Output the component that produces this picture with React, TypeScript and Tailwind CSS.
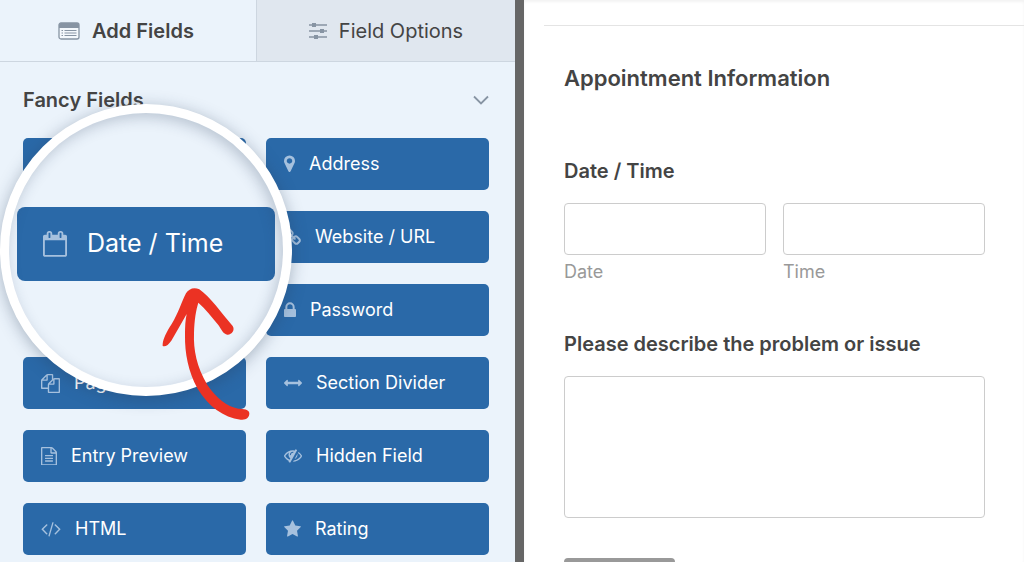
import React from 'react';

interface IconShape {
  viewBox: string;
  width: string;
  path: string;
}

interface FieldButtonProps {
  label?: string;
  name: string;
  icon?: IconShape;
}

const ICONS = {
  marker: {
    viewBox: '384 0 1024 1792',
    width: 'w-[11px]',
    path: 'M1152 640q0-106-75-181t-181-75-181 75-75 181 75 181 181 75 181-75 75-181zm256 0q0 109-33 179l-364 774q-16 33-47.5 52t-67.5 19-67.5-19-46.5-52l-365-774q-33-70-33-179 0-212 150-362t362-150 362 150 150 362z',
  },
  chain: {
    viewBox: '64 0 1664 1792',
    width: 'w-[17px]',
    path: 'M1520 1216q0-40-28-68l-208-208q-28-28-68-28-42 0-72 32 3 3 19 18.5t21.5 21.5 15 19 13 25.5 3.5 27.5q0 40-28 68t-68 28q-15 0-27.5-3.5t-25.5-13-19-15-21.5-21.5-18.5-19q-33 31-33 73 0 40 28 68l206 207q27 27 68 27 40 0 68-26l147-146q28-28 28-67zm-703-705q0-40-28-68l-206-207q-28-28-68-28-39 0-68 27l-147 146q-28 28-28 67 0 40 28 68l208 208q27 27 68 27 42 0 72-31-3-3-19-18.5t-21.5-21.5-15-19-13-25.5-3.5-27.5q0-40 28-68t68-28q15 0 27.5 3.5t25.5 13 19 15 21.5 21.5 18.5 19q33-31 33-73zm895 705q0 120-85 203l-147 146q-83 83-203 83-121 0-204-85l-206-207q-83-83-83-203 0-123 88-209l-88-88q-86 88-208 88-120 0-204-84l-208-208q-84-84-84-204t85-203l147-146q83-83 203-83 121 0 204 85l206 207q83 83 83 203 0 123-88 209l88 88q86-88 208-88 120 0 204 84l208 208q84 84 84 204z',
  },
  lock: {
    viewBox: '320 0 1152 1792',
    width: 'w-3',
    path: 'M640 768h512v-192q0-106-75-181t-181-75-181 75-75 181v192zm832 96v576q0 40-28 68t-68 28h-960q-40 0-68-28t-28-68v-576q0-40 28-68t68-28h32v-192q0-184 132-316t316-132 316 132 132 316v192h32q40 0 68 28t28 68z',
  },
  pages: {
    viewBox: '0 0 1792 1792',
    width: 'w-[19px]',
    path: 'M1696 384q40 0 68 28t28 68v1216q0 40-28 68t-68 28h-960q-40 0-68-28t-28-68v-288h-544q-40 0-68-28t-28-68v-672q0-40 20-88t48-76l408-408q28-28 76-48t88-20h416q40 0 68 28t28 68v328q68-40 128-40h416zm-544 213l-299 299h299v-299zm-640-384l-299 299h299v-299zm196 647l316-316v-416h-384v416q0 40-28 68t-68 28h-416v640h512v-256q0-40 20-88t48-76zm956 804v-1152h-384v416q0 40-28 68t-68 28h-416v640h896z',
  },
  arrows: {
    viewBox: '0 0 1792 1792',
    width: 'w-[18px]',
    path: 'M1792 896q0 26-19 45l-256 256q-19 19-45 19t-45-19-19-45v-128h-1024v128q0 26-19 45t-45 19-45-19l-256-256q-19-19-19-45t19-45l256-256q19-19 45-19t45 19 19 45v128h1024v-128q0-26 19-45t45-19 45 19l256 256q19 19 19 45z',
  },
  file: {
    viewBox: '128 0 1536 1792',
    width: 'w-4',
    path: 'M1596 380q28 28 48 76t20 88v1152q0 40-28 68t-68 28h-1344q-40 0-68-28t-28-68v-1600q0-40 28-68t68-28h896q40 0 88 20t76 48zm-444-244v376h376q-10-29-22-41l-313-313q-12-12-41-22zm384 1528v-1024h-416q-40 0-68-28t-28-68v-416h-768v1536h1280zm-1024-864q0-14 9-23t23-9h704q14 0 23 9t9 23v64q0 14-9 23t-23 9h-704q-14 0-23-9t-9-23v-64zm736 224q14 0 23 9t9 23v64q0 14-9 23t-23 9h-704q-14 0-23-9t-9-23v-64q0-14 9-23t23-9h704zm0 256q14 0 23 9t9 23v64q0 14-9 23t-23 9h-704q-14 0-23-9t-9-23v-64q0-14 9-23t23-9h704z',
  },
  hidden: {
    viewBox: '0 64 1792 1792',
    width: 'w-[18px]',
    path: 'M555 1335l78-141q-87-63-136-159t-49-203q0-121 61-225-229 117-381 353 167 258 427 375zm389-759q0-20-14-34t-34-14q-125 0-214.5 89.5t-89.5 214.5q0 20 14 34t34 14 34-14 14-34q0-86 61-147t147-61q20 0 34-14t14-34zm363-191q0 7-1 9-105 188-315 566t-316 567l-49 89q-10 16-28 16-12 0-134-70-16-10-16-28 0-12 44-87-143-65-263.5-173t-208.5-245q-20-31-20-69t20-69q153-235 380-371t496-136q89 0 180 17l54-97q10-16 28-16 5 0 18 6t31 15.5 33 18.5 31.5 18.5 19.5 11.5q16 10 16 27zm37 447q0 139-79 253.5t-209 164.5l280-502q8 45 8 84zm448 128q0 35-20 69-39 64-109 145-150 172-347.5 267t-419.5 95l74-132q212-18 392.5-137t301.5-307q-115-179-282-294l63-112q95 64 182.5 153t144.5 182q20 34 20 69z',
  },
  code: {
    viewBox: '-64 64 1920 1792',
    width: 'w-5',
    path: 'M553 1399l-50 50q-10 10-23 10t-23-10l-466-466q-10-10-10-23t10-23l466-466q10-10 23-10t23 10l50 50q10 10 10 23t-10 23l-393 393 393 393q10 10 10 23t-10 23zm591-1067l-373 1291q-4 13-15.5 19.5t-23.5 2.5l-62-17q-13-4-19.5-15.5t-2.5-24.5l373-1291q4-13 15.5-19.5t23.5-2.5l62 17q13 4 19.5 15.5t2.5 24.5zm657 651l-466 466q-10 10-23 10t-23-10l-50-50q-10-10-10-23t10-23l393-393-393-393q-10-10-10-23t10-23l50-50q10-10 23-10t23 10l466 466q10 10 10 23t-10 23z',
  },
  star: {
    viewBox: '64 0 1664 1792',
    width: 'w-[17px]',
    path: 'M1728 647q0 22-26 48l-363 354 86 500q1 7 1 20 0 21-10.5 35.5t-30.5 14.5q-19 0-40-12l-449-236-449 236q-22 12-40 12-21 0-31.5-14.5t-10.5-35.5q0-6 2-20l86-500-364-354q-25-27-25-48 0-37 56-46l502-73 225-455q19-41 49-41t49 41l225 455 502 73q56 9 56 46z',
  },
  calendar: {
    viewBox: '64 0 1664 1792',
    width: 'w-6',
    path: 'M192 1664h1408v-1024h-1408v1024zm384-1216v-288q0-14-9-23t-23-9h-64q-14 0-23 9t-9 23v288q0 14 9 23t23 9h64q14 0 23-9t9-23zm768 0v-288q0-14-9-23t-23-9h-64q-14 0-23 9t-9 23v288q0 14 9 23t23 9h64q14 0 23-9t9-23zm384-64v1280q0 52-38 90t-90 38h-1408q-52 0-90-38t-38-90v-1280q0-52 38-90t90-38h128v-96q0-66 47-113t113-47h64q66 0 113 47t47 113v96h384v-96q0-66 47-113t113-47h64q66 0 113 47t47 113v96h128q52 0 90 38t38 90z',
  },
};

// null leaves the slot under the lens empty
const FIELDS: (FieldButtonProps | null)[] = [
  { name: 'phone' },
  { name: 'address', label: 'Address', icon: ICONS.marker },
  null,
  { name: 'url', label: 'Website / URL', icon: ICONS.chain },
  null,
  { name: 'password', label: 'Password', icon: ICONS.lock },
  { name: 'pagebreak', label: 'Page Break', icon: ICONS.pages },
  { name: 'divider', label: 'Section Divider', icon: ICONS.arrows },
  { name: 'entry-preview', label: 'Entry Preview', icon: ICONS.file },
  { name: 'hidden', label: 'Hidden Field', icon: ICONS.hidden },
  { name: 'html', label: 'HTML', icon: ICONS.code },
  { name: 'rating', label: 'Rating', icon: ICONS.star },
];

const Icon: React.FC<{ shape: IconShape }> = ({ shape }) => (
  <svg viewBox={shape.viewBox} className={`${shape.width} shrink-0 fill-[#a6c1de]`} aria-hidden="true">
    <path d={shape.path} />
  </svg>
);

const FieldButton: React.FC<FieldButtonProps> = ({ label, name, icon }) => (
  <button
    type="button"
    name={name}
    className="flex h-[52px] items-center gap-3.5 rounded-[5px] bg-[#2a69a8] px-[18px] text-lg text-white"
  >
    {icon && <Icon shape={icon} />}
    {label}
  </button>
);

const Lens: React.FC = () => (
  <div className="absolute top-[104px] left-0 size-[292px] rounded-full border-[9px] border-white bg-[#ebf3fb] px-2 pt-[94px] shadow-[0_3px_16px_rgba(40,60,90,0.35)]">
    <button
      type="button"
      name="date-time"
      className="flex h-[74px] w-full items-center gap-5 rounded-lg bg-[#2a69a8] px-[26px] text-[25px] text-white"
    >
      <Icon shape={ICONS.calendar} />
      Date / Time
    </button>
    <div className="pointer-events-none absolute inset-0 rounded-full shadow-[inset_-3px_4px_14px_rgba(40,60,90,0.25)]" />
  </div>
);

const Arrow: React.FC = () => (
  <svg
    viewBox="480 105 279 411"
    className="absolute top-[285px] left-[160px] h-[137px] w-[93px] fill-[#eb3223]"
    aria-hidden="true"
  >
    <path d="M488 282C490 265 500 245 515 222C535 190 545 155 558 130C566 116 582 110 598 118C630 140 665 190 698 228C706 240 695 255 682 254C670 252 665 240 655 225C635 200 615 175 595 158C588 180 583 210 582 250C580 300 590 350 622 405C650 445 680 470 715 476C730 476 748 478 748 490C748 503 738 511 722 509C670 503 625 470 592 415C565 365 554 310 555 255C555 230 556 210 560 192C545 218 530 245 514 272C505 285 495 292 488 288Z" />
  </svg>
);

const Sidebar: React.FC = () => (
  <aside className="relative overflow-hidden bg-[#ebf3fb]">
    <nav className="grid h-[62px] grid-cols-[256fr_259fr] border-b border-[#cdd6e0] text-xl text-[#444]">
      <button type="button" className="flex items-center justify-center gap-3 pr-1 font-semibold">
        <svg viewBox="0 0 22 18" className="w-[22px]" aria-hidden="true">
          <rect x="1" y="1" width="20" height="16" rx="2" fill="#f4f8fc" stroke="#8794a3" strokeWidth="1.3" />
          <path d="M1 3Q1 1 3 1H19Q21 1 21 3V6H1Z" fill="#8794a3" />
          <path d="M3.500 8.500H5M3.500 11H5M3.500 13.500H5M6.500 8.500H18.500M6.500 11H18.500M6.500 13.500H18.500" stroke="#8794a3" strokeWidth="1.2" />
        </svg>
        Add Fields
      </button>
      <button
        type="button"
        className="flex items-center justify-center gap-3 border-l border-[#cdd6e0] bg-[#e0e7ef]"
      >
        <svg viewBox="0 0 18 18" className="w-[18px]" aria-hidden="true">
          <path d="M0 3H18M0 9H18M0 15H18" stroke="#8794a3" strokeWidth="1.4" />
          <path d="M3 1h4v4h-4zM11 7h4v4h-4zM5 13h4v4h-4z" fill="#8794a3" />
        </svg>
        Field Options
      </button>
    </nav>
    <section className="pr-[26px] pl-[23px]">
      <button
        type="button"
        aria-expanded="true"
        className="flex h-[76px] w-full items-center justify-between text-xl font-semibold text-[#444]"
      >
        Fancy Fields
        <svg viewBox="0 0 16 10" className="w-4" fill="none" stroke="#8794a3" strokeWidth="1.8" aria-hidden="true">
          <path d="M1 1.500L8 8.500L15 1.500" />
        </svg>
      </button>
      <div className="grid grid-cols-2 gap-x-5 gap-y-[21px]">
        {FIELDS.map((field, i) =>
          field ? <FieldButton key={field.name} {...field} /> : <div key={i} className="h-[52px]" />
        )}
      </div>
    </section>
    <Lens />
    <Arrow />
  </aside>
);

const inputClass = 'block w-full rounded border border-[#ccc] bg-white px-3 text-lg outline-none';

const Preview: React.FC = () => (
  <main className="overflow-hidden border-l-[9px] border-[#666] bg-white pl-5 text-[#444] shadow-[inset_0_2px_3px_rgba(0,0,0,0.05)]">
    <div className="h-[26px] border-b border-[#e4e4e4]" />
    <form className="pr-[39px] pl-5">
      <h2 className="pt-9 text-[22px] leading-8 font-semibold">Appointment Information</h2>
      <fieldset>
        <legend className="pt-[63px] text-xl leading-7 font-semibold">Date / Time</legend>
        <div className="grid grid-cols-2 gap-[17px] pt-[18px]">
          <div>
            <input id="date" type="text" className={`${inputClass} h-[52px]`} />
            <label htmlFor="date" className="block pt-[3px] text-lg leading-7 text-[#999]">
              Date
            </label>
          </div>
          <div>
            <input id="time" type="text" className={`${inputClass} h-[52px]`} />
            <label htmlFor="time" className="block pt-[3px] text-lg leading-7 text-[#999]">
              Time
            </label>
          </div>
        </div>
      </fieldset>
      <label htmlFor="problem" className="block pt-11 text-xl leading-7 font-semibold">
        Please describe the problem or issue
      </label>
      <textarea id="problem" className={`${inputClass} mt-[18px] h-[142px] resize-none`} />
      <button type="submit" aria-label="Submit" className="mt-10 h-12 w-[111px] rounded bg-[#999]" />
    </form>
  </main>
);

const App: React.FC = () => {
  return (
    <div className="grid h-screen grid-cols-[515fr_509fr] overflow-hidden font-['Inter',sans-serif]">
      <Sidebar />
      <Preview />
    </div>
  );
};

export default App;
